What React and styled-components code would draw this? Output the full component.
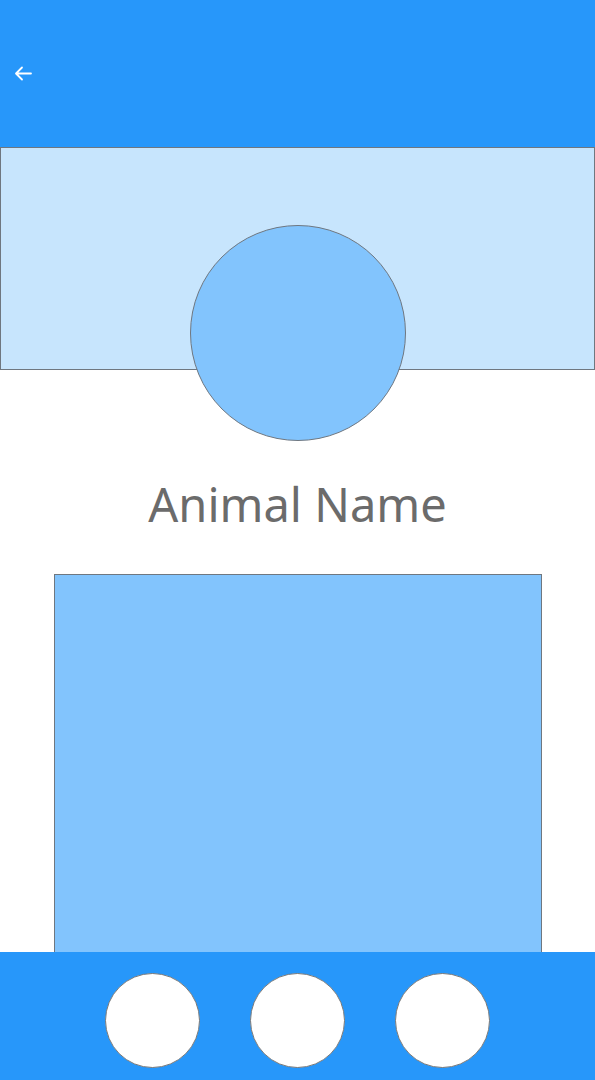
import React from "react";
import styled, {createGlobalStyle} from "styled-components";

const GlobalStyle = createGlobalStyle`
  html, body {
    margin: 0;
    padding: 0;
    background: #ffffff;
  }

  body {
    font-family: "Noto Sans", "Open Sans", sans-serif;
  }
`;

const Page = styled.div`
  width: 595px;
  height: 1080px;
  display: flex;
  flex-direction: column;
  overflow: hidden;
`;

const Header = styled.header`
  height: 147px;
  background: #2797fa;
  display: flex;
  align-items: center;
  padding-left: 13px;
  box-sizing: border-box;
`;

const BackButton = styled.button`
  border: none;
  background: none;
  padding: 0;
  width: 20px;
  height: 20px;
  display: flex;
  cursor: pointer;
`;

const Hero = styled.section`
  display: flex;
  flex-direction: column;
  align-items: center;
`;

const Banner = styled.div`
  width: 595px;
  height: 223px;
  box-sizing: border-box;
  background: #c7e5fd;
  border: 1px solid #6f7780;
`;

const Avatar = styled.div`
  position: relative;
  width: 216px;
  height: 216px;
  margin-top: -145px;
  box-sizing: border-box;
  border-radius: 50%;
  background: #82c4fd;
  border: 1px solid #6f7780;
`;

const Title = styled.h1`
  margin: 30px 0 0;
  font-weight: 400;
  font-size: 47px;
  line-height: 66px;
  color: #6b6b6b;
  text-align: center;
`;

const Content = styled.div`
  width: 488px;
  height: 378px;
  margin: 37px auto 0;
  box-sizing: border-box;
  background: #82c4fd;
  border: 1px solid #6f7780;
  border-bottom: none;
`;

const BottomBar = styled.nav`
  height: 128px;
  background: #2797fa;
  display: flex;
  align-items: center;
  justify-content: center;
  gap: 50px;
  padding-top: 8px;
  box-sizing: border-box;
`;

const NavButton = styled.div`
  width: 95px;
  height: 95px;
  box-sizing: border-box;
  border-radius: 50%;
  background: #ffffff;
  border: 1px solid #7a7a7a;
`;

export default function App() {
  return (
    <>
      <GlobalStyle />
      <Page>
        <Header>
          <BackButton aria-label="Back">
            <svg width="20" height="20" viewBox="0 0 20 20" fill="none">
              <path
                d="M18 9.5H3.5M9 3.5L3 9.5L9 15.5"
                stroke="#ffffff"
                strokeWidth="1.8"
                strokeLinecap="round"
                strokeLinejoin="round"
              />
            </svg>
          </BackButton>
        </Header>
        <Hero>
          <Banner />
          <Avatar />
        </Hero>
        <Title>Animal Name</Title>
        <Content />
        <BottomBar>
          <NavButton />
          <NavButton />
          <NavButton />
        </BottomBar>
      </Page>
    </>
  );
}
